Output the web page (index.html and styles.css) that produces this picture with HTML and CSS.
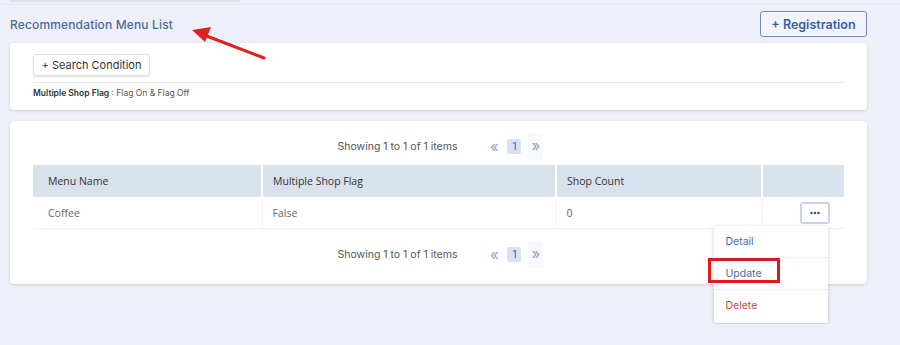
FILE: index.html
```html
<!DOCTYPE html>
<html lang="en">
<head>
    <meta charset="UTF-8">
    <meta name="viewport" content="width=device-width, initial-scale=1.0">
    <title>Recommendation Menu List</title>
    <link rel="stylesheet" href="styles.css">
</head>
<body>
    <div class="topline"><div class="topline-tab"></div></div>
    <div class="main">
        <!-- Title + registration -->
        <div class="page-header">
            <h2 class="page-title">Recommendation Menu List</h2>
            <button class="btn-register">+ Registration</button>
        </div>

        <!-- annotation arrow -->
        <svg class="note-arrow" width="90" height="45" viewBox="0 0 90 45">
            <line x1="80" y1="40" x2="20" y2="17" stroke="#e02020" stroke-width="3" stroke-linecap="round"/>
            <polygon points="8,12 27,9 21,24" fill="#e02020"/>
        </svg>

        <!-- Search card -->
        <div class="card search-card">
            <button class="btn-search">+ Search Condition</button>
            <div class="search-summary">
                <strong>Multiple Shop Flag</strong> : Flag On &amp; Flag Off
            </div>
        </div>

        <!-- List card -->
        <div class="card list-card">
            <div class="pager">
                <span class="pager-info">Showing 1 to 1 of 1 items</span>
                <span class="pager-nav">
                    <span class="pager-arrow">&laquo;</span>
                    <span class="pager-page">1</span>
                    <span class="pager-arrow next">&raquo;</span>
                </span>
            </div>

            <table class="menu-table">
                <colgroup>
                    <col style="width: 229px">
                    <col style="width: 294px">
                    <col style="width: 206px">
                    <col>
                </colgroup>
                <thead>
                    <tr>
                        <th>Menu Name</th>
                        <th>Multiple Shop Flag</th>
                        <th>Shop Count</th>
                        <th></th>
                    </tr>
                </thead>
                <tbody>
                    <tr>
                        <td>Coffee</td>
                        <td>False</td>
                        <td>0</td>
                        <td class="actions">
                            <div class="action-wrap">
                                <button class="btn-more">
                                    <svg width="10" height="4" viewBox="0 0 10 4">
                                        <circle cx="1.5" cy="2" r="1.3" fill="#555"/>
                                        <circle cx="5" cy="2" r="1.3" fill="#555"/>
                                        <circle cx="8.5" cy="2" r="1.3" fill="#555"/>
                                    </svg>
                                </button>
                                <div class="dropdown">
                                    <a class="dropdown-item">Detail</a>
                                    <a class="dropdown-item">Update</a>
                                    <a class="dropdown-item danger">Delete</a>
                                    <div class="note-box"></div>
                                </div>
                            </div>
                        </td>
                    </tr>
                </tbody>
            </table>

            <div class="pager pager-bottom">
                <span class="pager-info">Showing 1 to 1 of 1 items</span>
                <span class="pager-nav">
                    <span class="pager-arrow">&laquo;</span>
                    <span class="pager-page">1</span>
                    <span class="pager-arrow next">&raquo;</span>
                </span>
            </div>
        </div>
    </div>
</body>
</html>
```

FILE: styles.css
```css
/* Global */
body {
    margin: 0;
    background: #edf0f8;
    font-family: 'Inter', 'Open Sans', sans-serif;
    color: #333;
}

.topline {
    height: 4px;
    border-bottom: 1px solid #e4e8f0;
    padding-left: 10px;
}

.topline-tab {
    width: 230px;
    height: 2px;
    background: #dde2ec;
}

.main {
    position: relative;
    padding: 6px 33px 40px 10px;
}

/* Header */
.page-header {
    display: flex;
    justify-content: space-between;
    align-items: center;
    height: 26px;
}

.page-title {
    margin: 0;
    font-size: 12px;
    font-weight: 500;
    color: #4d6a9c;
    letter-spacing: 0.15px;
}

.btn-register {
    width: 107px;
    height: 26px;
    background: #f1f4fa;
    border: 1px solid #6f8cc2;
    border-radius: 3px;
    color: #3a5ea6;
    font-family: inherit;
    font-size: 12.5px;
    font-weight: 600;
    cursor: pointer;
}

.note-arrow {
    position: absolute;
    left: 184px;
    top: 13px;
}

/* Cards */
.card {
    background: #fff;
    border-radius: 4px;
    box-shadow: 0 1px 3px rgba(0, 0, 0, 0.15);
}

.search-card {
    margin-top: 6px;
    height: 67px;
    box-sizing: border-box;
    padding: 10px 22px 0 23px;
}

.btn-search {
    width: 117px;
    height: 22px;
    background: #fff;
    border: 1px solid #e0e0e0;
    border-radius: 3px;
    box-shadow: 0 1px 2px rgba(0, 0, 0, 0.12);
    font-family: inherit;
    font-size: 11px;
    color: #333;
    padding: 0;
}

.search-summary {
    margin-top: 6px;
    border-top: 1px solid #e6e6e6;
    padding-top: 4px;
    font-size: 8.5px;
    line-height: 12px;
    color: #555;
}

.search-summary strong {
    color: #333;
    font-weight: 600;
}

.list-card {
    margin-top: 11px;
    padding: 12px 23px 16px 23px;
}

/* Pager */
.pager {
    display: flex;
    justify-content: center;
    align-items: center;
    height: 27px;
    padding-left: 4px;
    font-size: 10.5px;
    color: #555;
}

.pager-bottom {
    margin-top: 12px;
}

.pager-nav {
    display: flex;
    align-items: center;
    margin-left: 30px;
}

.pager-arrow {
    color: #8da2c8;
    font-size: 15px;
    width: 14px;
    margin-right: 6px;
    text-align: center;
}

.pager-arrow.next {
    background: #f7f9fc;
    height: 27px;
    line-height: 25px;
    width: 15px;
    margin-right: 0;
}

.pager-page {
    margin: 0 7px 0 0;
    width: 14px;
    height: 15px;
    line-height: 15px;
    text-align: center;
    background: #d5e3f5;
    color: #3a5ea6;
    border-radius: 2px;
    font-size: 10px;
}

/* Table */
.menu-table {
    width: 100%;
    margin-top: 5px;
    border-collapse: collapse;
    table-layout: fixed;
    font-family: 'Open Sans', sans-serif;
    font-size: 10.5px;
}

.menu-table th {
    height: 32px;
    background: #d9e1ec;
    text-align: left;
    font-weight: 500;
    color: #333;
    padding: 0 10px;
    border-left: 2px solid #fff;
}

.menu-table th:first-child {
    padding-left: 15px;
    border-left: none;
}

.menu-table td {
    height: 31px;
    padding: 0 10px;
    color: #666;
    border-left: 1px solid #eef0f3;
    border-bottom: 1px solid #eceef2;
}

.menu-table td:first-child {
    padding-left: 15px;
    border-left: none;
}

.menu-table td.actions {
    padding: 0;
}

.action-wrap {
    position: relative;
    width: 30px;
    margin-left: 37px;
}

.btn-more {
    display: flex;
    align-items: center;
    justify-content: center;
    width: 30px;
    height: 22px;
    background: #fff;
    border: 2px solid #c5d3ee;
    border-radius: 3px;
    padding: 0;
}

/* Dropdown */
.dropdown {
    position: absolute;
    right: 2px;
    top: 24px;
    width: 114px;
    background: #fff;
    box-shadow: 0 1px 4px rgba(0, 0, 0, 0.2);
    border-radius: 2px;
    z-index: 5;
}

.dropdown-item {
    display: block;
    height: 31px;
    line-height: 31px;
    padding-left: 12px;
    font-family: 'Inter', sans-serif;
    font-size: 10.5px;
    color: #4a6cb0;
    border-bottom: 1px solid #eceff3;
}

.dropdown-item.danger {
    color: #d04848;
    border-bottom: none;
    height: 33px;
}

.note-box {
    position: absolute;
    left: -6px;
    top: 32px;
    width: 66px;
    height: 19px;
    border: 3px solid #d81b1b;
}
```
